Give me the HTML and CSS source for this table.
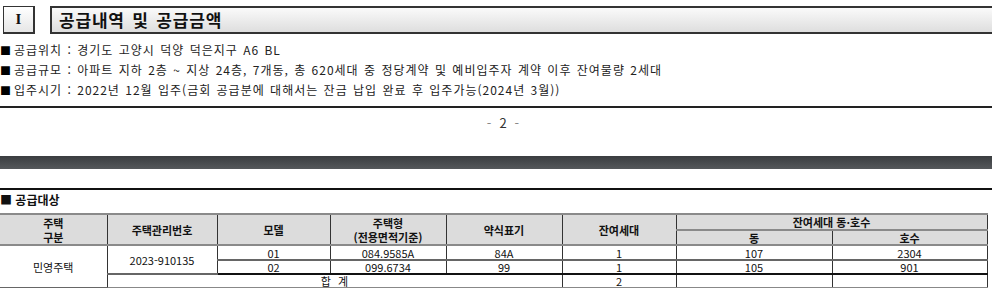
FILE: index.html
```html
<!DOCTYPE html>
<html lang="ko">
<head>
<meta charset="utf-8">
<link rel="stylesheet" href="styles.css">
</head>
<body>
<div class="page">
  <div class="head">
    <div class="roman">I</div>
    <div class="title">공급내역 및 공급금액</div>
  </div>
  <ul class="bullets">
    <li>공급위치 : 경기도 고양시 덕양 덕은지구 A6 BL</li>
    <li>공급규모 : 아파트 지하 2층 ~ 지상 24층, 7개동, 총 620세대 중 정당계약 및 예비입주자 계약 이후 잔여물량 2세대</li>
    <li>입주시기 : 2022년 12월 입주(금회 공급분에 대해서는 잔금 납입 완료 후 입주가능(2024년 3월))</li>
  </ul>
  <div class="rule"></div>
  <div class="pageno"><span class="dash">-</span><span class="num">2</span><span class="dash">-</span></div>
  <div class="darkbar"></div>
  <div class="rule rule2"></div>
  <div class="sub">■ 공급대상</div>
  <table class="tbl">
    <colgroup>
      <col style="width:107px"><col style="width:110px"><col style="width:113px"><col style="width:116px">
      <col style="width:116px"><col style="width:114px"><col style="width:156px"><col style="width:155px">
    </colgroup>
    <thead>
      <tr class="h1">
        <th rowspan="2" class="c0">주택<br>구분</th>
        <th rowspan="2">주택관리번호</th>
        <th rowspan="2">모델</th>
        <th rowspan="2">주택형<br>(전용면적기준)</th>
        <th rowspan="2">약식표기</th>
        <th rowspan="2">잔여세대</th>
        <th colspan="2" class="top">잔여세대 동·호수</th>
      </tr>
      <tr class="h2">
        <th class="bot">동</th>
        <th class="bot">호수</th>
      </tr>
    </thead>
    <tbody>
      <tr class="r1">
        <td rowspan="3" class="c0">민영주택</td>
        <td rowspan="2">2023-910135</td>
        <td>01</td><td>084.9585A</td><td>84A</td><td>1</td><td>107</td><td>2304</td>
      </tr>
      <tr class="r2">
        <td>02</td><td>099.6734</td><td>99</td><td>1</td><td>105</td><td>901</td>
      </tr>
      <tr class="r3">
        <td colspan="4" class="sum">합 계</td><td>2</td><td></td><td></td>
      </tr>
    </tbody>
  </table>
</div>
</body>
</html>
```

FILE: styles.css
```css
* { box-sizing: border-box; }
html, body { margin: 0; padding: 0; background: #fff; }
body {
  font-family: "Noto Sans CJK KR", "Noto Sans", sans-serif;
  color: #111;
  width: 992px;
  height: 288px;
  overflow: hidden;
}
.page { width: 992px; }

.head {
  display: flex;
  align-items: stretch;
  gap: 15px;
  padding: 6px 0 0 3px;
  height: 34px;
}
.roman {
  width: 32px;
  height: 28px;
  border: 1px solid #333;
  border-right-width: 2px;
  border-bottom-width: 2px;
  background: linear-gradient(#ffffff, #e6e6e6);
  font-family: "Liberation Serif", serif;
  font-weight: bold;
  font-size: 15px;
  display: flex;
  align-items: center;
  justify-content: center;
  color: #111;
}
.title {
  flex: 1;
  height: 28px;
  border-top: 2px solid #333;
  border-bottom: 2px solid #333;
  border-left: 2px solid #333;
  background: linear-gradient(#fafafa, #dedede);
  font-weight: bold;
  font-size: 17px;
  letter-spacing: 0.8px;
  word-spacing: 2px;
  line-height: 24px;
  padding-left: 7px;
  color: #111;
}

.bullets {
  list-style: none;
  margin: 0;
  padding: 6px 0 0 0;
  font-size: 12px;
  line-height: 19px;
  color: #222;
}
.bullets li { white-space: nowrap; letter-spacing: 1px; word-spacing: 1px; }
.bullets li::before {
  content: "■";
  font-size: 11px;
  margin-right: 3px;
  letter-spacing: 0;
  color: #000;
}

.rule {
  height: 2px;
  background: #222;
  margin-top: 6px;
}
.pageno {
  display: flex;
  justify-content: center;
  gap: 8px;
  font-size: 13px;
  line-height: 16px;
  margin-top: 7px;
  padding-left: 14px;
  color: #333;
}
.pageno .dash { color: #888; }
.darkbar {
  height: 13px;
  margin-top: 25px;
  background: linear-gradient(#3a3d40, #55585b);
}
.rule2 {
  margin-top: 19px;
  background: #111;
}
.sub {
  font-weight: bold;
  font-size: 12px;
  line-height: 20px;
  height: 23px;
}

.tbl {
  border-collapse: collapse;
  table-layout: fixed;
  width: 987px;
  font-size: 11px;
  text-align: center;
  color: #111;
}
.tbl th, .tbl td {
  padding: 0;
  border: 1px solid #333;
  line-height: 12px;
  overflow: hidden;
}
.tbl th {
  background: #dcdcdc;
  font-weight: bold;
  border-top: 2px solid #8a8a8a;
  border-bottom: 2px solid #8a8a8a;
  line-height: 14px;
}
.tbl tr.h1 { height: 16px; }
.tbl tr.h2 { height: 15px; }
.tbl tr.r1 { height: 15px; }
.tbl tr.r2 { height: 14px; }
.tbl tr.r3 { height: 14px; }
.tbl th.top { border-bottom: 2px solid #8a8a8a; line-height: 12px; }
.tbl th.bot { border-top: 0; line-height: 12px; }
.tbl th.c0, .tbl td.c0 { border-left: 0; }
.tbl tr.r1 td { border-top: 0; border-bottom: 2px solid #666; }
.tbl tr.r2 td { border-bottom: 2px solid #111; }
.tbl tr.r3 td { border-bottom: 2px solid #888; }
.tbl td.c0 { border-bottom: 2px solid #888; }
.tbl td.sum { word-spacing: 4px; }
```
